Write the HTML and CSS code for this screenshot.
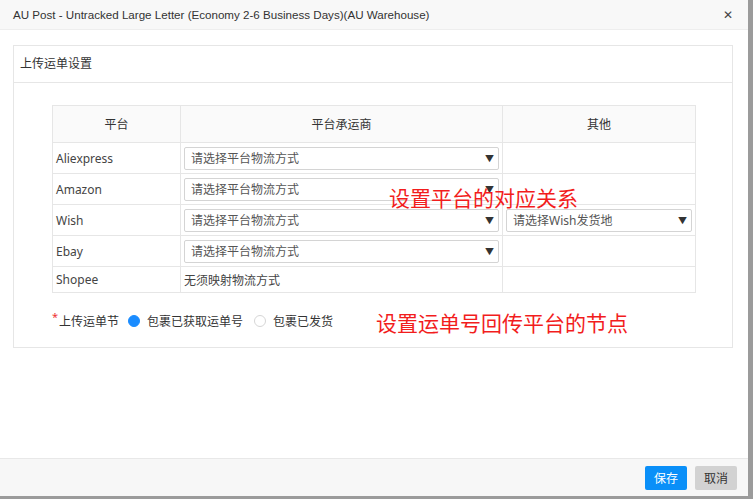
FILE: index.html
```html
<!DOCTYPE html>
<html lang="zh-CN">
<head>
    <meta charset="UTF-8">
    <title>上传运单设置</title>
    <link rel="stylesheet" href="styles.css">
</head>
<body>
    <div class="dialog">
        <div class="dialog-header">
            <span class="dialog-title">AU Post - Untracked Large Letter (Economy 2-6 Business Days)(AU Warehouse)</span>
            <span class="dialog-close">&#x2715;</span>
        </div>

        <div class="dialog-body">
            <div class="panel">
                <div class="panel-heading">上传运单设置</div>
                <div class="panel-body">
                    <table class="map-table">
                        <tr>
                            <th class="col-platform">平台</th>
                            <th class="col-carrier">平台承运商</th>
                            <th class="col-other">其他</th>
                        </tr>
                        <tr>
                            <td>Aliexpress</td>
                            <td><div class="select"><span>请选择平台物流方式</span><i>&#9660;</i></div></td>
                            <td></td>
                        </tr>
                        <tr>
                            <td>Amazon</td>
                            <td><div class="select"><span>请选择平台物流方式</span><i>&#9660;</i></div></td>
                            <td></td>
                        </tr>
                        <tr>
                            <td>Wish</td>
                            <td><div class="select"><span>请选择平台物流方式</span><i>&#9660;</i></div></td>
                            <td><div class="select"><span>请选择Wish发货地</span><i>&#9660;</i></div></td>
                        </tr>
                        <tr>
                            <td>Ebay</td>
                            <td><div class="select"><span>请选择平台物流方式</span><i>&#9660;</i></div></td>
                            <td></td>
                        </tr>
                        <tr class="row-short">
                            <td>Shopee</td>
                            <td>无须映射物流方式</td>
                            <td></td>
                        </tr>
                    </table>

                    <div class="node-row">
                        <span class="node-label"><sup class="required">*</sup>上传运单节</span>
                        <label class="radio"><span class="radio-dot checked"></span>包裹已获取运单号</label>
                        <label class="radio"><span class="radio-dot"></span>包裹已发货</label>
                        <span class="note note-node">设置运单号回传平台的节点</span>
                    </div>

                    <span class="note note-map">设置平台的对应关系</span>
                </div>
            </div>
        </div>

        <div class="dialog-footer">
            <button class="btn btn-primary">保存</button>
            <button class="btn btn-default">取消</button>
        </div>
    </div>
</body>
</html>
```

FILE: styles.css
```css
body {
    margin: 0;
    background-color: #9b9b9b;
    font-family: "Noto Sans", "Noto Sans CJK SC", sans-serif;
    font-size: 12px;
    color: #333;
}
.dialog {
    width: 748px;
    height: 496px;
    background-color: #fff;
    display: flex;
    flex-direction: column;
}
.dialog-header {
    height: 29px;
    background-color: #f8f8f8;
    border-bottom: 1px solid #eee;
    padding: 0 15px 0 13px;
    display: flex;
    align-items: center;
    justify-content: space-between;
}
.dialog-title {
    font-family: "Liberation Sans", "Noto Sans CJK SC", sans-serif;
    font-size: 11.6px;
    color: #333;
}
.dialog-close {
    font-size: 12px;
    color: #444;
}
.dialog-body {
    flex: 1;
    padding: 15px 15px 0 13px;
}
.panel {
    border: 1px solid #e6e6e6;
}
.panel-heading {
    height: 36px;
    line-height: 36px;
    padding-left: 6px;
    border-bottom: 1px solid #e6e6e6;
    font-size: 12px;
}
.panel-body {
    position: relative;
    padding: 22px 0 0 38px;
    height: 242px;
}
.map-table {
    width: 644px;
    border-collapse: collapse;
}
.map-table th,
.map-table td {
    border: 1px solid #e6e6e6;
    padding: 0 3px;
    height: 30px;
    text-align: left;
    font-weight: normal;
    color: #444;
}
.map-table th {
    height: 36px;
    text-align: center;
    background-color: #fafafa;
    color: #333;
}
.map-table .row-short td {
    height: 25px;
}
.col-platform { width: 121px; }
.col-carrier { width: 315px; }
.select {
    height: 23px;
    border: 1px solid #d4d4d4;
    border-radius: 2px;
    display: flex;
    align-items: center;
    justify-content: space-between;
    padding: 0 4px 0 6px;
    color: #555;
    box-sizing: border-box;
}
.select i {
    font-style: normal;
    font-size: 9px;
    color: #333;
}
.node-row {
    display: flex;
    align-items: center;
    margin-top: 20px;
    height: 16px;
}
.node-label {
    margin-right: 9px;
}
.required {
    color: #e33;
    font-size: 11px;
    vertical-align: top;
    position: relative;
    top: -3px;
    margin-right: 1px;
}
.radio {
    display: flex;
    align-items: center;
    margin-right: 11px;
}
.radio-dot {
    width: 10px;
    height: 10px;
    border: 1px solid #d6d6d6;
    border-radius: 50%;
    margin-right: 7px;
    background-color: #fff;
}
.radio-dot.checked {
    border-color: #1a8cff;
    background-color: #1a8cff;
}
.note {
    color: #f21d1d;
    font-size: 21px;
}
.note-node {
    margin-left: 32px;
    margin-top: 2px;
}
.note-map {
    position: absolute;
    left: 375px;
    top: 99px;
}
.dialog-footer {
    height: 37px;
    background-color: #f7f7f7;
    border-top: 1px solid #e8e8e8;
    display: flex;
    align-items: center;
    justify-content: flex-end;
    padding-right: 11px;
    gap: 8px;
}
.btn {
    height: 24px;
    padding: 0 9px;
    border: none;
    border-radius: 2px;
    font-family: "Noto Sans CJK SC", sans-serif;
    font-size: 12px;
    cursor: pointer;
}
.btn-primary {
    background-color: #0a8ff8;
    color: #fff;
}
.btn-default {
    background-color: #d2d2d2;
    color: #333;
}
```
